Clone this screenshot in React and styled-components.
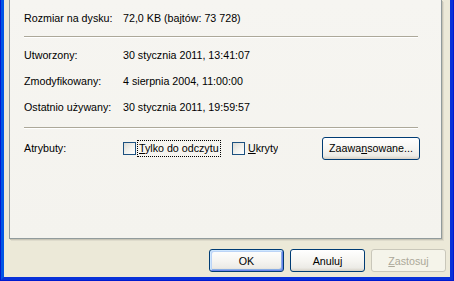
import React from 'react';
import styled, { createGlobalStyle, css } from 'styled-components';

const Global = createGlobalStyle`
  html, body { margin: 0; padding: 0; background: #ECE9D8; }
  body {
    width: 454px; height: 281px; overflow: hidden;
    font-family: "Liberation Sans", Arial, sans-serif;
    font-size: 10.7px; color: #000;
  }
`;

const Window = styled.div`
  box-sizing: border-box;
  width: 454px;
  height: 281px;
  border: 1px solid #0019CF;
  border-top: none;
  background: #ECE9D8;
`;

const Frame = styled.div`
  box-sizing: border-box;
  height: 100%;
  border-left: 3px solid #0055E5;
  border-right: 3px solid #0831D9;
  border-bottom: 3px solid #0831D9;
  display: flex;
  flex-direction: column;
  padding: 0 4px 0 5px;
`;

const Panel = styled.div`
  box-sizing: border-box;
  height: 239px;
  margin-right: 4px;
  border: 1px solid #919B9C;
  border-top: none;
  box-shadow: 1px 1px 0 #C8C5B6, 2px 2px 0 #DEDBCC;
  background: linear-gradient(180deg, #F6F5F1 0%, #F4F3EE 100%);
  padding: 12px 23px 0 14px;
  display: flex;
  flex-direction: column;
`;

const InfoRow = styled.div`
  display: grid;
  grid-template-columns: 99px 1fr;
  height: 13px;
  line-height: 13px;
  white-space: nowrap;
  margin-top: ${(p) => p.$gap || 0}px;
`;

const Separator = styled.div`
  height: 0;
  border-top: 1px solid #ACA899;
  border-bottom: 1px solid #FFFFFF;
  margin-top: ${(p) => p.$gap}px;
`;

const AttrRow = styled.div`
  display: flex;
  align-items: center;
  height: 23px;
  margin-top: 8px;
  line-height: 13px;
  white-space: nowrap;
`;

const AttrLabel = styled.span`
  width: 99px;
  flex: none;
`;

const CheckItem = styled.label`
  display: flex;
  align-items: center;
  width: ${(p) => p.$w}px;
  flex: none;
`;

const Box = styled.span`
  box-sizing: border-box;
  width: 13px;
  height: 13px;
  flex: none;
  border: 1px solid #1C5180;
  background: linear-gradient(135deg, #DCDBD5 0%, #F2F2EE 55%, #FFFFFF 100%);
`;

const CheckText = styled.span`
  box-sizing: border-box;
  margin-left: 2px;
  padding: 1px 0 1px 1px;
  overflow: hidden;
  ${(p) => p.$w && css`width: ${p.$w}px;`}
  ${(p) => p.$focused && css`outline: 1px dotted #000; outline-offset: 0;`}
`;

const Key = styled.span`
  text-decoration: underline;
  text-underline-offset: 1px;
`;

const Button = styled.button`
  box-sizing: border-box;
  width: ${(p) => p.$w || 75}px;
  height: 23px;
  padding: 0;
  font: inherit;
  color: #000;
  border: 1px solid #003C74;
  border-radius: 3px;
  background: linear-gradient(180deg, #FFFFFF 0%, #F5F4F0 55%, #ECEBE6 85%, #D6D0C5 100%);
  flex: none;
  ${(p) => p.$default && css`
    box-shadow: inset 1px 1px 0 #CEE7FF, inset -1px -1px 0 #6982EE,
      inset 2px 2px 0 #BCD4F6, inset -2px -2px 0 #89ADE4;
  `}
  &:disabled {
    border-color: #C9C7BA;
    background: #F5F4EA;
    color: #ACA899;
  }
`;

const ButtonBar = styled.div`
  display: flex;
  justify-content: flex-end;
  gap: 6px;
  padding-top: 10px;
`;

const rows = [
  ['Utworzony:', '30 stycznia 2011, 13:41:07'],
  ['Zmodyfikowany:', '4 sierpnia 2004, 11:00:00'],
  ['Ostatnio używany:', '30 stycznia 2011, 19:59:57'],
];

export default function App() {
  return (
    <>
      <Global />
      <Window>
        <Frame>
          <Panel>
            <InfoRow>
              <span>Rozmiar na dysku:</span>
              <span>72,0 KB (bajtów: 73 728)</span>
            </InfoRow>
            <Separator $gap={11} />
            {rows.map(([l, v], i) => (
              <InfoRow key={l} $gap={i === 0 ? 11 : 13}>
                <span>{l}</span>
                <span>{v}</span>
              </InfoRow>
            ))}
            <Separator $gap={13} />
            <AttrRow>
              <AttrLabel>Atrybuty:</AttrLabel>
              <CheckItem $w={109}>
                <Box />
                <CheckText $w={82} $focused>
                  <Key>T</Key>ylko do odczytu
                </CheckText>
              </CheckItem>
              <CheckItem $w={90}>
                <Box />
                <CheckText>
                  <Key>U</Key>kryty
                </CheckText>
              </CheckItem>
              <Button $w={98}>
                Zaawa<Key>n</Key>sowane...
              </Button>
            </AttrRow>
          </Panel>
          <ButtonBar>
            <Button $default>OK</Button>
            <Button>Anuluj</Button>
            <Button disabled>
              <Key>Z</Key>astosuj
            </Button>
          </ButtonBar>
        </Frame>
      </Window>
    </>
  );
}
